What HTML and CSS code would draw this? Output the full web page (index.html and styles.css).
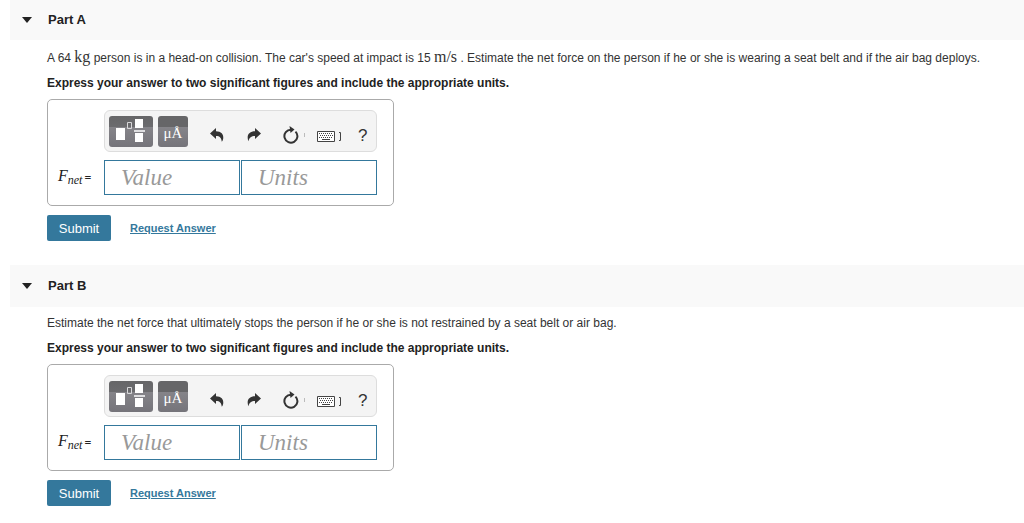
FILE: index.html
```html
<!DOCTYPE html>
<html lang="en">
<head>
<meta charset="utf-8">
<title>Part A and Part B</title>
<link rel="stylesheet" href="styles.css">
</head>
<body>
<svg class="sprite" aria-hidden="true">
  <defs>
    <linearGradient id="key" x1="0" y1="0" x2="0" y2="1">
      <stop offset="0" stop-color="#666668"/><stop offset=".34" stop-color="#6b6b6e"/>
      <stop offset=".36" stop-color="#858489"/><stop offset="1" stop-color="#75747a"/>
    </linearGradient>
  </defs>
  <symbol id="templates" viewBox="0 0 44 31">
    <rect width="44" height="31" rx="3" fill="url(#key)"/>
    <path fill="#fff" d="M7 12h9v12H7zM26 3h8v9h-8zM26 17h8v9h-8z"/>
    <path fill="#dedee0" d="M25 14h11v2H25z"/>
    <path fill="none" stroke="#d8d8da" d="M18.500 6.500h4v6h-4z"/>
  </symbol>
  <symbol id="undo" viewBox="0 0 14 14">
    <path fill="#333" d="M0 5.500 6 0v3.200c5 0 8 3 7.200 7.600-.2 1.200-.7 2.200-1.400 3C11.400 10 9.800 8 6 8v3z"/>
  </symbol>
  <symbol id="redo" viewBox="0 0 14 14">
    <path fill="#333" d="M14 5.500 8 0v3.200C3 3.200 0 6.200.8 10.800c.2 1.200.3 1.800.5 2.500C2.500 9.500 4.200 8 8 8v3z"/>
  </symbol>
  <symbol id="reset" viewBox="0 0 24 18">
    <path fill="none" stroke="#333" stroke-width="2" d="M9 3.700A6.500 6.500 0 1 0 13.500 5.600"/>
    <path fill="#333" d="M7.500 0l5 3.500L8.500 7z"/>
    <path fill="none" stroke="#bbb" d="M22.500 7v4"/>
  </symbol>
  <symbol id="keyboard" viewBox="0 0 26 12">
    <path fill="#fff" stroke="#444" d="M.5.500h17v10H.5z"/>
    <path fill="none" stroke="#444" stroke-dasharray="1 1" d="M2 2.500h14M3 4.500h13M2 6.500h14"/>
    <path fill="none" stroke="#444" d="M5 8.500h8M22 1.500h1.500v8H22"/>
  </symbol>
</svg>

<main class="parts">
  <section class="part">
    <header class="part-header">
      <button class="toggle" aria-label="Collapse Part A"></button>
      <h2>Part A</h2>
    </header>
    <form class="part-body">
      <p class="prompt">A 64 <span class="unit">kg</span> person is in a head-on collision. The car's speed at impact is 15 <span class="unit">m/s</span> . Estimate the net force on the person if he or she is wearing a seat belt and if the air bag deploys.</p>
      <p class="instruction">Express your answer to two significant figures and include the appropriate units.</p>
      <div class="answer">
        <div class="toolbar">
          <button type="button" class="tool" aria-label="Templates"><svg class="templates"><use href="#templates"/></svg></button>
          <button type="button" class="symbols">μÅ</button>
          <button type="button" class="tool action" aria-label="Undo"><svg class="arrow"><use href="#undo"/></svg></button>
          <button type="button" class="tool action" aria-label="Redo"><svg class="arrow"><use href="#redo"/></svg></button>
          <button type="button" class="tool reset" aria-label="Reset"><svg><use href="#reset"/></svg></button>
          <button type="button" class="tool keyboard" aria-label="Keyboard shortcuts"><svg><use href="#keyboard"/></svg></button>
          <button type="button" class="tool help">?</button>
        </div>
        <label class="quantity" for="value-a"><span><i>F</i><i class="sub">net</i></span> <span class="equals">=</span></label>
        <div class="fields">
          <input id="value-a" placeholder="Value">
          <input aria-label="Units" placeholder="Units">
        </div>
      </div>
      <div class="actions">
        <button type="submit" class="submit">Submit</button>
        <a href="#answer-a">Request Answer</a>
      </div>
    </form>
  </section>

  <section class="part">
    <header class="part-header">
      <button class="toggle" aria-label="Collapse Part B"></button>
      <h2>Part B</h2>
    </header>
    <form class="part-body">
      <p class="prompt">Estimate the net force that ultimately stops the person if he or she is not restrained by a seat belt or air bag.</p>
      <p class="instruction">Express your answer to two significant figures and include the appropriate units.</p>
      <div class="answer">
        <div class="toolbar">
          <button type="button" class="tool" aria-label="Templates"><svg class="templates"><use href="#templates"/></svg></button>
          <button type="button" class="symbols">μÅ</button>
          <button type="button" class="tool action" aria-label="Undo"><svg class="arrow"><use href="#undo"/></svg></button>
          <button type="button" class="tool action" aria-label="Redo"><svg class="arrow"><use href="#redo"/></svg></button>
          <button type="button" class="tool reset" aria-label="Reset"><svg><use href="#reset"/></svg></button>
          <button type="button" class="tool keyboard" aria-label="Keyboard shortcuts"><svg><use href="#keyboard"/></svg></button>
          <button type="button" class="tool help">?</button>
        </div>
        <label class="quantity" for="value-b"><span><i>F</i><i class="sub">net</i></span> <span class="equals">=</span></label>
        <div class="fields">
          <input id="value-b" placeholder="Value">
          <input aria-label="Units" placeholder="Units">
        </div>
      </div>
      <div class="actions">
        <button type="submit" class="submit">Submit</button>
        <a href="#answer-b">Request Answer</a>
      </div>
    </form>
  </section>
</main>
</body>
</html>
```
FILE: styles.css
```css
* { box-sizing: border-box; }

body {
  margin: 0;
  background: #fff;
  color: #333;
  font: 12px/17px "Liberation Sans", Arial, sans-serif;
}

h2, p { margin: 0; }

button {
  padding: 0;
  border: 0;
  background: none;
  color: inherit;
  font: inherit;
}

.sprite {
  position: absolute;
  width: 0;
  height: 0;
}

.parts {
  display: flex;
  flex-direction: column;
  gap: 24px;
  padding-left: 10px;
}

.part-header {
  display: flex;
  align-items: center;
  height: 42px;
  gap: 16px;
  padding-left: 12px;
  background: #f9f9f9;
}

.part:first-child .part-header { height: 40px; }

.part-header h2 {
  color: #222;
  font-size: 13px;
  line-height: 16px;
}

.toggle {
  border: 5px solid transparent;
  border-top: 6px solid #222;
  border-bottom: 0;
}

.part-body { padding: 8px 16px 0 37px; }

.part:first-child .part-body { padding-top: 10px; }

.prompt { margin-bottom: 8px; }

.unit {
  font-family: "Liberation Serif", serif;
  font-size: 16px;
  line-height: 1px;
}

.instruction {
  margin-bottom: 8px;
  color: #222;
  font-weight: bold;
  line-height: 16px;
}

.answer {
  display: grid;
  grid-template-columns: 46px auto;
  gap: 8px 0;
  width: fit-content;
  padding: 10px 16px 10px 10px;
  border: 1px solid #aaa;
  border-radius: 5px;
}

.toolbar {
  grid-column: 2;
  display: flex;
  align-items: center;
  height: 42px;
  padding: 0 4px;
  border: 1px solid #ddd;
  border-radius: 6px;
  background: #f4f4f4;
}

.tool { display: flex; }

.templates { width: 44px; height: 31px; }

.symbols {
  width: 30px;
  height: 31px;
  margin: 0 22px 0 5px;
  border-radius: 3px;
  background: linear-gradient(#666668 0 34%, #858489 36%, #75747a);
  color: #fff;
  font: 15px/34px "Liberation Serif", serif;
}

.action { margin-right: 23px; padding-top: 8px; }

.action + .reset { margin-left: -2px; }

.arrow { width: 14px; height: 14px; }

.reset { padding-top: 8px; }

.reset svg { width: 24px; height: 18px; }

.keyboard { margin-left: 11px; padding-top: 11px; }

.keyboard svg { width: 26px; height: 12px; }

.help {
  margin-left: 15px;
  padding-top: 8px;
  font-size: 17px;
}

.quantity {
  display: flex;
  align-items: center;
  gap: 2px;
  color: #222;
  font: 16px/20px "Liberation Serif", serif;
}

.sub { font-size: 12px; vertical-align: -3px; }

.equals { font-size: 12px; font-weight: bold; }

.fields { display: flex; gap: 1px; }

.fields input {
  width: 136px;
  height: 35px;
  padding: 0 16px;
  border: 1px solid #34789c;
  font: italic 23px/26px "Liberation Serif", serif;
}

.fields input::placeholder { color: #999; opacity: 1; }

.actions {
  display: flex;
  align-items: center;
  gap: 19px;
  margin-top: 9px;
}

.submit {
  width: 64px;
  height: 26px;
  border-radius: 2px;
  background: #34789c;
  color: #fff;
  font-size: 13px;
}

.actions a {
  color: #34789c;
  font-size: 11px;
  font-weight: bold;
}
```
